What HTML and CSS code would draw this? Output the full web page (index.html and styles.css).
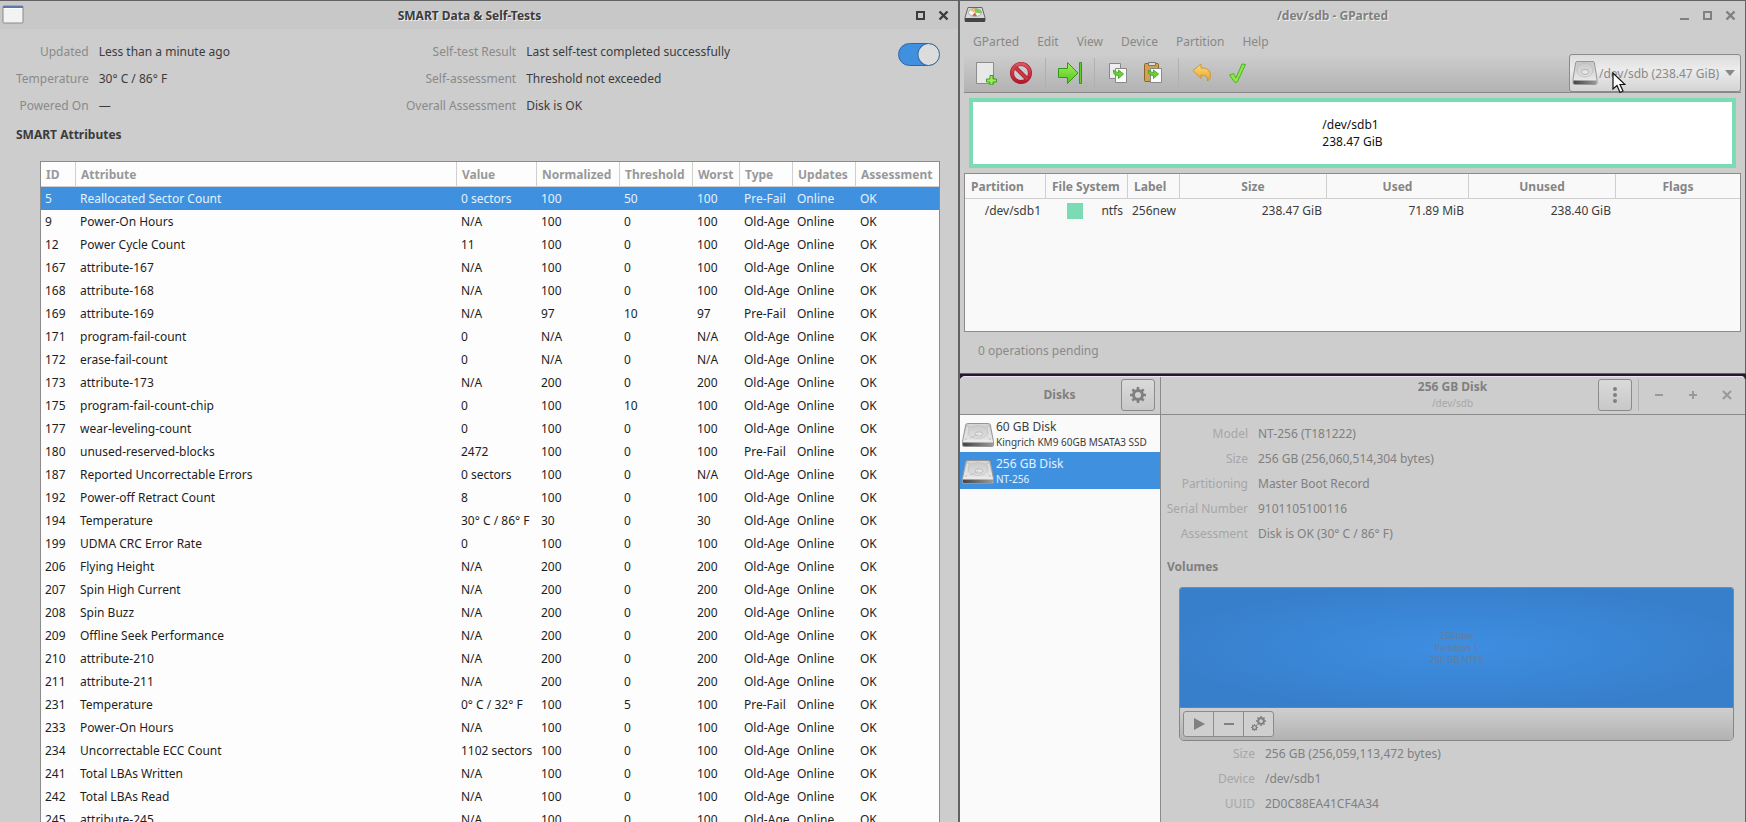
FILE: index.html
```html
<!DOCTYPE html>
<html lang="en">
<head>
  <meta charset="UTF-8">
  <meta name="viewport" content="width=device-width, initial-scale=1.0">
  <title>SMART Data &amp; Self-Tests</title>
  <link rel="stylesheet" href="styles.css">
</head>
<body>
  <svg class="defs" width="0" height="0" aria-hidden="true">
    <defs>
      <linearGradient id="metal" x1="0" y1="0" x2="0" y2="1">
        <stop offset="0" stop-color="#c6c6c6"/>
        <stop offset="1" stop-color="#f0f0f0"/>
      </linearGradient>
      <linearGradient id="front" x1="0" y1="0" x2="1" y2="0">
        <stop offset="0" stop-color="#444"/>
        <stop offset="1" stop-color="#9a9a9a"/>
      </linearGradient>
      <linearGradient id="green" x1="0" y1="0" x2="0" y2="1">
        <stop offset="0" stop-color="#a4ef5c"/>
        <stop offset="1" stop-color="#4fc81c"/>
      </linearGradient>
      <linearGradient id="red" x1="0" y1="0" x2="0" y2="1">
        <stop offset="0" stop-color="#dc5560"/>
        <stop offset="1" stop-color="#b8182c"/>
      </linearGradient>
      <linearGradient id="amber" x1="0" y1="0" x2="0" y2="1">
        <stop offset="0" stop-color="#fbdc7a"/>
        <stop offset="1" stop-color="#e9a52c"/>
      </linearGradient>
    </defs>
    <symbol id="disk" viewBox="0 0 32 26">
      <path d="M5.500 1.500h21q1.500 0 1.800 1.500l3.200 16.500v3.500q0 1.500-1.500 1.500H2q-1.500 0-1.500-1.500v-3.500L3.700 3q.3-1.500 1.800-1.500z" fill="url(#metal)" stroke="#969696"/>
      <path d="M1 20.500h30v2.500q0 1-1 1H2q-1 0-1-1z" fill="url(#front)"/>
      <path d="M6 3h20l3 15.500H3z" fill="none" stroke="#ededed" stroke-width=".7"/>
      <ellipse cx="16" cy="10" rx="9.500" ry="6.500" fill="none" stroke="#c2c2c2" stroke-width=".8"/>
      <ellipse cx="17" cy="12" rx="4" ry="2.200" fill="#e4e4e4" stroke="#b4b4b4" stroke-width=".8"/>
      <path d="M16 12.500l-8 3.500" stroke="#c4c4c4"/>
      <g fill="#aaa"><circle cx="6" cy="4" r=".7"/><circle cx="26" cy="4" r=".7"/><circle cx="4" cy="17" r=".7"/><circle cx="28" cy="17" r=".7"/></g>
    </symbol>
    <symbol id="gear" viewBox="0 0 16 16">
      <g fill="currentColor">
        <path fill-rule="evenodd" d="M8 2a6 6 0 1 0 0 12A6 6 0 0 0 8 2zm0 3a3 3 0 1 1 0 6 3 3 0 0 1 0-6z"/>
        <path id="tooth" d="M6.700 0h2.600v3H6.700zM6.700 13h2.600v3H6.700zM0 6.700h3v2.600H0zM13 6.700h3v2.600h-3z"/>
        <use href="#tooth" transform="rotate(45 8 8)"/>
      </g>
    </symbol>
  </svg>

  <main class="desktop">
    <section class="window smart">
      <header class="titlebar">
        <svg class="app-icon" width="22" height="20" viewBox="0 0 22 20">
          <rect x="1" y="1" width="20" height="17" rx="1" fill="#f3f3f3" stroke="#8a8a8a"/>
          <path d="M1 1h20v2H1z" fill="#5d78a8"/>
          <path d="M2 3h18v1H2z" fill="#fff"/>
        </svg>
        <h1>SMART Data &amp; Self-Tests</h1>
        <div class="window-buttons">
          <button type="button" aria-label="Maximize"><svg width="11" height="11"><path d="M2 2h7v7H2z" fill="none" stroke="currentColor" stroke-width="2"/></svg></button>
          <button type="button" aria-label="Close"><svg width="11" height="11"><path d="M1.500 1.500l8 8M9.500 1.500l-8 8" stroke="currentColor" stroke-width="2.400"/></svg></button>
        </div>
      </header>

      <div class="summary">
        <dl class="facts">
          <dt>Updated</dt><dd>Less than a minute ago</dd>
          <dt>Temperature</dt><dd>30° C / 86° F</dd>
          <dt>Powered On</dt><dd>—</dd>
        </dl>
        <dl class="facts">
          <dt>Self-test Result</dt><dd>Last self-test completed successfully</dd>
          <dt>Self-assessment</dt><dd>Threshold not exceeded</dd>
          <dt>Overall Assessment</dt><dd>Disk is OK</dd>
        </dl>
        <input class="switch" type="checkbox" role="switch" aria-label="Enable SMART" checked>
      </div>

      <h2>SMART Attributes</h2>

      <div class="attributes">
        <table>
          <colgroup>
            <col class="c-id"><col><col class="c-value"><col class="c-norm"><col class="c-thresh"><col class="c-worst"><col class="c-type"><col class="c-updates"><col class="c-assess">
          </colgroup>
          <thead>
            <tr><th>ID</th><th>Attribute</th><th>Value</th><th>Normalized</th><th>Threshold</th><th>Worst</th><th>Type</th><th>Updates</th><th>Assessment</th></tr>
          </thead>
          <tbody>
            <tr class="selected"><td>5</td><td>Reallocated Sector Count</td><td>0 sectors</td><td>100</td><td>50</td><td>100</td><td>Pre-Fail</td><td>Online</td><td>OK</td></tr>
            <tr><td>9</td><td>Power-On Hours</td><td>N/A</td><td>100</td><td>0</td><td>100</td><td>Old-Age</td><td>Online</td><td>OK</td></tr>
            <tr><td>12</td><td>Power Cycle Count</td><td>11</td><td>100</td><td>0</td><td>100</td><td>Old-Age</td><td>Online</td><td>OK</td></tr>
            <tr><td>167</td><td>attribute-167</td><td>N/A</td><td>100</td><td>0</td><td>100</td><td>Old-Age</td><td>Online</td><td>OK</td></tr>
            <tr><td>168</td><td>attribute-168</td><td>N/A</td><td>100</td><td>0</td><td>100</td><td>Old-Age</td><td>Online</td><td>OK</td></tr>
            <tr><td>169</td><td>attribute-169</td><td>N/A</td><td>97</td><td>10</td><td>97</td><td>Pre-Fail</td><td>Online</td><td>OK</td></tr>
            <tr><td>171</td><td>program-fail-count</td><td>0</td><td>N/A</td><td>0</td><td>N/A</td><td>Old-Age</td><td>Online</td><td>OK</td></tr>
            <tr><td>172</td><td>erase-fail-count</td><td>0</td><td>N/A</td><td>0</td><td>N/A</td><td>Old-Age</td><td>Online</td><td>OK</td></tr>
            <tr><td>173</td><td>attribute-173</td><td>N/A</td><td>200</td><td>0</td><td>200</td><td>Old-Age</td><td>Online</td><td>OK</td></tr>
            <tr><td>175</td><td>program-fail-count-chip</td><td>0</td><td>100</td><td>10</td><td>100</td><td>Old-Age</td><td>Online</td><td>OK</td></tr>
            <tr><td>177</td><td>wear-leveling-count</td><td>0</td><td>100</td><td>0</td><td>100</td><td>Old-Age</td><td>Online</td><td>OK</td></tr>
            <tr><td>180</td><td>unused-reserved-blocks</td><td>2472</td><td>100</td><td>0</td><td>100</td><td>Pre-Fail</td><td>Online</td><td>OK</td></tr>
            <tr><td>187</td><td>Reported Uncorrectable Errors</td><td>0 sectors</td><td>100</td><td>0</td><td>N/A</td><td>Old-Age</td><td>Online</td><td>OK</td></tr>
            <tr><td>192</td><td>Power-off Retract Count</td><td>8</td><td>100</td><td>0</td><td>100</td><td>Old-Age</td><td>Online</td><td>OK</td></tr>
            <tr><td>194</td><td>Temperature</td><td>30° C / 86° F</td><td>30</td><td>0</td><td>30</td><td>Old-Age</td><td>Online</td><td>OK</td></tr>
            <tr><td>199</td><td>UDMA CRC Error Rate</td><td>0</td><td>100</td><td>0</td><td>100</td><td>Old-Age</td><td>Online</td><td>OK</td></tr>
            <tr><td>206</td><td>Flying Height</td><td>N/A</td><td>200</td><td>0</td><td>200</td><td>Old-Age</td><td>Online</td><td>OK</td></tr>
            <tr><td>207</td><td>Spin High Current</td><td>N/A</td><td>200</td><td>0</td><td>200</td><td>Old-Age</td><td>Online</td><td>OK</td></tr>
            <tr><td>208</td><td>Spin Buzz</td><td>N/A</td><td>200</td><td>0</td><td>200</td><td>Old-Age</td><td>Online</td><td>OK</td></tr>
            <tr><td>209</td><td>Offline Seek Performance</td><td>N/A</td><td>200</td><td>0</td><td>200</td><td>Old-Age</td><td>Online</td><td>OK</td></tr>
            <tr><td>210</td><td>attribute-210</td><td>N/A</td><td>200</td><td>0</td><td>200</td><td>Old-Age</td><td>Online</td><td>OK</td></tr>
            <tr><td>211</td><td>attribute-211</td><td>N/A</td><td>200</td><td>0</td><td>200</td><td>Old-Age</td><td>Online</td><td>OK</td></tr>
            <tr><td>231</td><td>Temperature</td><td>0° C / 32° F</td><td>100</td><td>5</td><td>100</td><td>Pre-Fail</td><td>Online</td><td>OK</td></tr>
            <tr><td>233</td><td>Power-On Hours</td><td>N/A</td><td>100</td><td>0</td><td>100</td><td>Old-Age</td><td>Online</td><td>OK</td></tr>
            <tr><td>234</td><td>Uncorrectable ECC Count</td><td>1102 sectors</td><td>100</td><td>0</td><td>100</td><td>Old-Age</td><td>Online</td><td>OK</td></tr>
            <tr><td>241</td><td>Total LBAs Written</td><td>N/A</td><td>100</td><td>0</td><td>100</td><td>Old-Age</td><td>Online</td><td>OK</td></tr>
            <tr><td>242</td><td>Total LBAs Read</td><td>N/A</td><td>100</td><td>0</td><td>100</td><td>Old-Age</td><td>Online</td><td>OK</td></tr>
            <tr><td>245</td><td>attribute-245</td><td>N/A</td><td>100</td><td>0</td><td>100</td><td>Old-Age</td><td>Online</td><td>OK</td></tr>
          </tbody>
        </table>
      </div>
    </section>

    <div class="side">
      <section class="window gparted">
        <header class="titlebar inactive">
          <svg class="app-icon" width="22" height="20" viewBox="0 0 22 20">
            <path d="M4 2.500h14l3 10v3q0 1-1 1H2q-1 0-1-1v-3z" fill="#d8d8d8" stroke="#666"/>
            <path d="M1 13h20v3q0 1-1 1H2q-1 0-1-1z" fill="#444"/>
            <ellipse cx="11" cy="7.500" rx="6.500" ry="4" fill="#f5f5f5" stroke="#888" stroke-width=".6"/>
            <path d="M11 7.500L6 5.500a6.500 4 0 0 1 5-2z" fill="#f0c060"/>
            <path d="M11 7.500v-4a6.500 4 0 0 1 6 5z" fill="#7ccc50"/>
            <path d="M11 7.500l2 3.500a6.500 4 0 0 1-5-.5z" fill="#d8605a"/>
          </svg>
          <h1>/dev/sdb - GParted</h1>
          <div class="window-buttons">
            <button type="button" aria-label="Minimize"><svg width="11" height="11"><path d="M1 9h9" stroke="currentColor" stroke-width="2"/></svg></button>
            <button type="button" aria-label="Maximize"><svg width="11" height="11"><path d="M2 2h7v7H2z" fill="none" stroke="currentColor" stroke-width="2"/></svg></button>
            <button type="button" aria-label="Close"><svg width="11" height="11"><path d="M1.500 1.500l8 8M9.500 1.500l-8 8" stroke="currentColor" stroke-width="2.400"/></svg></button>
          </div>
        </header>

        <nav class="menubar">
          <button type="button">GParted</button>
          <button type="button">Edit</button>
          <button type="button">View</button>
          <button type="button">Device</button>
          <button type="button">Partition</button>
          <button type="button">Help</button>
        </nav>

        <div class="toolbar">
          <div class="tools">
            <button type="button" aria-label="New">
              <svg width="24" height="24" viewBox="0 0 24 24">
                <path d="M2.500 1.500h17v21h-17z" fill="#e8e8e8" stroke="#8c8c8c"/>
                <path d="M16 14.500h3v3.500h3.500v3h-3.500v3h-3v-3h-3.500v-3h3.500z" fill="#9cec62" stroke="#3f9d16"/>
              </svg>
            </button>
            <button type="button" aria-label="Delete">
              <svg width="24" height="24" viewBox="0 0 24 24">
                <circle cx="12" cy="12" r="9" fill="#ccc" stroke="#a41c2c" stroke-width="4"/>
                <path d="M6 6l12 12" stroke="#a41c2c" stroke-width="4"/>
                <circle cx="12" cy="12" r="9" fill="none" stroke="url(#red)" stroke-width="2.800"/>
                <path d="M5.500 5.500l13 13" stroke="#cc3848" stroke-width="2.600"/>
              </svg>
            </button>
          </div>
          <div class="tools">
            <button type="button" aria-label="Resize/Move">
              <svg width="24" height="24" viewBox="0 0 24 24">
                <path d="M.5 7.500h9v-6L20 12 9.500 22.500v-6h-9z" fill="url(#green)" stroke="#35961a"/>
                <path d="M21.500 1.500h2v21h-2z" fill="#5fd030" stroke="#35961a"/>
              </svg>
            </button>
          </div>
          <div class="tools">
            <button type="button" aria-label="Copy">
              <svg width="24" height="24" viewBox="0 0 24 24">
                <path d="M2.500 2.500h11v15h-11z" fill="#eee" stroke="#888"/>
                <path d="M8.500 7.500h11v14h-11z" fill="#fafafa" stroke="#888"/>
                <path d="M6.500 9q-1 5.500 5 5.500v3l5-4.500-5-4v2.500q-3 0-5-2.500z" fill="#6bcf38" stroke="#3b9d1a" stroke-width=".8"/>
              </svg>
            </button>
            <button type="button" aria-label="Paste">
              <svg width="24" height="24" viewBox="0 0 24 24">
                <rect x="2.500" y="2.500" width="14" height="18" rx="1" fill="#d2a052" stroke="#8a6428"/>
                <path d="M6.500 1.500h7v3h-7z" fill="#ddd" stroke="#777"/>
                <path d="M8.500 7.500h11v14h-11z" fill="#fafafa" stroke="#888"/>
                <path d="M6.500 9q-1 5.500 5 5.500v3l5-4.500-5-4v2.500q-3 0-5-2.500z" fill="#6bcf38" stroke="#3b9d1a" stroke-width=".8"/>
              </svg>
            </button>
          </div>
          <div class="tools">
            <button type="button" aria-label="Undo">
              <svg width="24" height="24" viewBox="0 0 24 24">
                <path d="M2 9.500l8-6.500v4q9.500-.5 9.500 7.500 0 3.500-3 5.500 1-6-6.500-6v3.500z" fill="url(#amber)" stroke="#c88a28" stroke-width=".8"/>
              </svg>
            </button>
            <button type="button" aria-label="Apply">
              <svg width="24" height="24" viewBox="0 0 24 24">
                <path d="M3.500 14l4-1.500 2.500 4.500L16 3l3.500.5-8 17q-1.500 2-3 .5z" fill="#8ae84c" stroke="#4db31e"/>
              </svg>
            </button>
          </div>
          <label class="device">
            <svg width="26" height="26" viewBox="0 0 26 26">
              <path d="M5 1.500h16q1 0 1.300 1L25 19v4q0 1.500-1.500 1.500h-21Q1 24.500 1 23v-4L3.700 2.500q.3-1 1.300-1z" fill="url(#metal)" stroke="#969696"/>
              <path d="M1.500 20.500h23V23q0 1-1 1h-21q-1 0-1-1z" fill="url(#front)"/>
              <ellipse cx="13" cy="10" rx="8" ry="7" fill="none" stroke="#bbb" stroke-width=".8"/>
              <ellipse cx="13" cy="12" rx="4" ry="2.500" fill="#e4e4e4" stroke="#aaa" stroke-width=".8"/>
            </svg>
            <select aria-label="Device">
              <option>/dev/sdb (238.47 GiB)</option>
            </select>
            <svg width="10" height="6"><path d="M0 0h10L5 6z" fill="#888"/></svg>
          </label>
        </div>

        <div class="partition-map">
          <div>/dev/sdb1<br>238.47 GiB</div>
        </div>

        <div class="partitions">
          <table>
            <colgroup>
              <col class="c-part"><col class="c-fs"><col class="c-label"><col class="c-size"><col class="c-used"><col class="c-unused"><col>
            </colgroup>
            <thead>
              <tr><th>Partition</th><th>File System</th><th>Label</th><th>Size</th><th>Used</th><th>Unused</th><th>Flags</th></tr>
            </thead>
            <tbody>
              <tr><td class="num">/dev/sdb1</td><td><span class="fs"><i></i>ntfs</span></td><td>256new</td><td class="num">238.47 GiB</td><td class="num">71.89 MiB</td><td class="num">238.40 GiB</td><td></td></tr>
            </tbody>
          </table>
        </div>
        <p class="pending">0 operations pending</p>
      </section>

      <section class="window disks">
        <aside class="disk-list">
          <header class="headerbar">
            <h1>Disks</h1>
            <button type="button" class="boxed" aria-label="Application menu"><svg width="16" height="16"><use href="#gear"/></svg></button>
          </header>
          <ul>
            <li>
              <svg width="32" height="26"><use href="#disk"/></svg>
              <div>60 GB Disk<small>Kingrich KM9 60GB MSATA3 SSD</small></div>
            </li>
            <li class="selected">
              <svg width="32" height="26"><use href="#disk"/></svg>
              <div>256 GB Disk<small>NT-256</small></div>
            </li>
          </ul>
        </aside>

        <div class="disk-detail">
          <header class="headerbar">
            <h1>256 GB Disk<small>/dev/sdb</small></h1>
            <button type="button" class="boxed" aria-label="Drive menu">
              <svg width="16" height="16"><g fill="currentColor"><circle cx="8" cy="2" r="2"/><circle cx="8" cy="8" r="2"/><circle cx="8" cy="14" r="2"/></g></svg>
            </button>
            <div class="header-buttons">
              <button type="button" aria-label="Minimize"><svg width="10" height="10"><path d="M1 5h8" stroke="currentColor" stroke-width="2"/></svg></button>
              <button type="button" aria-label="Maximize"><svg width="10" height="10"><path d="M1 5h8M5 1v8" stroke="currentColor" stroke-width="2"/></svg></button>
              <button type="button" aria-label="Close"><svg width="10" height="10"><path d="M1 1l8 8M9 1l-8 8" stroke="currentColor" stroke-width="2"/></svg></button>
            </div>
          </header>

          <dl class="facts drive">
            <dt>Model</dt><dd>NT-256 (T181222)</dd>
            <dt>Size</dt><dd>256 GB (256,060,514,304 bytes)</dd>
            <dt>Partitioning</dt><dd>Master Boot Record</dd>
            <dt>Serial Number</dt><dd>9101105100116</dd>
            <dt>Assessment</dt><dd>Disk is OK (30° C / 86° F)</dd>
          </dl>

          <h2>Volumes</h2>
          <div class="volumes">
            <div class="volume">256new<br>Partition 1<br>256 GB NTFS</div>
            <div class="volume-tools">
              <div class="group">
                <button type="button" aria-label="Mount"><svg width="12" height="14"><path d="M1 1v12l11-6z" fill="currentColor"/></svg></button>
                <button type="button" aria-label="Delete partition"><svg width="12" height="12"><path d="M1 6h10" stroke="currentColor" stroke-width="2"/></svg></button>
                <button type="button" aria-label="Partition options"><svg width="16" height="16"><use href="#gear" x="5" y="0" width="10" height="10"/><use href="#gear" x="0" y="8" width="7" height="7"/></svg></button>
              </div>
            </div>
          </div>
          <dl class="facts volume-facts">
            <dt>Size</dt><dd>256 GB (256,059,113,472 bytes)</dd>
            <dt>Device</dt><dd>/dev/sdb1</dd>
            <dt>UUID</dt><dd>2D0C88EA41CF4A34</dd>
          </dl>
        </div>
      </section>
    </div>
  </main>

  <svg class="pointer" width="14" height="22" viewBox="0 0 14 22">
    <path d="M1 1v16l4-3.500 3 7 3-1.500-3-6.500h5z" fill="#fff" stroke="#111" stroke-width="1.200"/>
  </svg>
</body>
</html>
```
FILE: styles.css
```css
* {
  margin: 0;
  padding: 0;
  box-sizing: border-box;
}

body {
  font-family: 'Noto Sans', sans-serif;
  font-size: 12px;
  line-height: 17px;
  height: 100vh;
  overflow: hidden;
  background: #251833;
  color: #3c3c3c;
}

button, select {
  font: inherit;
  color: inherit;
  background: none;
  border: none;
}

svg {
  display: block;
  flex: none;
}

ul {
  list-style: none;
}

.defs {
  position: absolute;
}

.desktop {
  display: grid;
  grid-template-columns: minmax(0, 960fr) minmax(0, 786fr);
  height: 100vh;
}

.side {
  display: flex;
  flex-direction: column;
  gap: 2px;
  min-height: 0;
}

.window {
  background: #cdcdcd;
  border-top: 1px solid #626262;
  border-right: 1px solid #626262;
  overflow: hidden;
}

/* Title bars */

.titlebar {
  display: flex;
  align-items: center;
  height: 28px;
  padding: 0 9px 0 2px;
  background: #c8c8c8;
}

.titlebar h1 {
  flex: 1;
  text-align: center;
  font-size: 12px;
  text-shadow: 1px 1px 0 #eee;
}

.titlebar.inactive {
  background: #cdcdcd;
  color: #808080;
}

.window-buttons {
  display: flex;
  gap: 12px;
}

h2 {
  font-size: 12px;
}

.facts {
  display: grid;
  grid-template-columns: auto 1fr;
  grid-auto-rows: 27px;
  align-items: center;
  column-gap: 10px;
  white-space: nowrap;
}

.facts dt {
  text-align: right;
  color: #8a8a8a;
}

/* SMART window */

.smart {
  display: flex;
  flex-direction: column;
  min-height: 0;
  border-right-width: 2px;
}

.summary {
  display: grid;
  grid-template-columns: 390fr 492fr 42px;
  padding: 9px 18px 0 16px;
}

.switch {
  appearance: none;
  width: 42px;
  height: 23px;
  margin-top: 5px;
  border: 1px solid #2f66a5;
  border-radius: 12px;
  background: radial-gradient(circle at 30px 50%, #dcdcdc 10px, #2f66a5 11px, #4090e0 12px);
}

.smart h2 {
  padding: 7px 16px;
}

.attributes {
  flex: 1;
  min-height: 0;
  overflow: hidden;
  margin: 11px 18px 0 40px;
  border: 1px solid #8b8b8b;
  border-bottom: none;
  background: #fdfdfd;
}

table {
  width: 100%;
  table-layout: fixed;
  border-collapse: separate;
  border-spacing: 0;
  white-space: nowrap;
}

th {
  height: 25px;
  padding: 0 5px;
  text-align: left;
  color: #999;
  border-left: 1px solid #cfcfcf;
  border-bottom: 1px solid #cfcfcf;
}

th:first-child {
  border-left: none;
}

td {
  height: 23px;
  padding: 0 4px 0 5px;
}

.attributes td {
  color: #1d1d1d;
}

td:first-child {
  padding-left: 4px;
}

.attributes .selected td {
  background: #4090e0;
  color: #e4f2fd;
}

.c-id { width: 34px; }
.c-value { width: 80px; }
.c-norm { width: 83px; }
.c-thresh { width: 73px; }
.c-worst { width: 47px; }
.c-type { width: 53px; }
.c-updates { width: 63px; }
.c-assess { width: 84px; }

/* GParted window */

.gparted {
  display: flex;
  flex-direction: column;
  flex: none;
  height: 374px;
  border-bottom: 1px solid #626262;
}

.gparted .titlebar {
  padding-left: 4px;
}

.menubar {
  display: flex;
  gap: 18px;
  padding: 4px 13px;
  color: #888;
}

.toolbar {
  display: flex;
  align-items: center;
  height: 39px;
  padding-left: 4px;
  margin: 0 4px;
  background: linear-gradient(#cdcdcd, #b2b2b2);
  border-bottom: 1px solid #888;
}

.tools {
  display: flex;
  gap: 11px;
  padding: 3px 12px;
  border-left: 1px solid #b0b0b0;
}

.tools:first-child {
  padding-left: 6px;
  border-left: none;
}

.device {
  display: flex;
  align-items: center;
  gap: 1px;
  align-self: stretch;
  margin-left: auto;
  padding: 0 5px 0 2px;
  border: 1px solid #8b8b8b;
  border-radius: 3px;
  background: linear-gradient(#dcdcdc, #ececec 40%, #d4d4d4);
  color: #8a8a8a;
}

.device select {
  appearance: none;
  padding-right: 4px;
}

.partition-map {
  display: flex;
  align-items: center;
  justify-content: center;
  height: 70px;
  margin: 5px 9px;
  border: 4px solid #7adbb5;
  background: #fff;
  color: #111;
}

.partitions {
  flex: 1;
  margin: 0 4px;
  border: 1px solid #8b8b8b;
  background: #f9f9f9;
}

.partitions th {
  padding: 0 6px;
  text-align: center;
  color: #858585;
}

.partitions th:nth-child(-n+3) {
  text-align: left;
}

.partitions .num {
  text-align: right;
}

.fs {
  display: flex;
  align-items: center;
  justify-content: space-between;
  padding-left: 17px;
}

.fs i {
  width: 16px;
  height: 16px;
  background: #7adbb5;
}

.c-part { width: 80px; }
.c-fs { width: 82px; }
.c-label { width: 52px; }
.c-size { width: 147px; }
.c-used { width: 142px; }
.c-unused { width: 147px; }

.pending {
  padding: 10px 18px 14px;
  color: #8a8a8a;
}

/* Disks window */

.disks {
  display: flex;
  flex: 1;
  min-height: 0;
  border-top-color: #ece4f0;
  border-radius: 5px 5px 0 0;
  color: #808080;
}

.disk-list {
  flex: none;
  width: 201px;
  border-right: 1px solid #8b8b8b;
  background: #fafafa;
}

.headerbar {
  display: flex;
  align-items: center;
  height: 38px;
  padding-bottom: 1px;
  border-bottom: 1px solid #8b8b8b;
  background: #cdcdcd;
}

.headerbar h1 {
  flex: 1;
  text-align: center;
  font-size: 12px;
  line-height: 16px;
}

.headerbar small {
  display: block;
  font-size: 10px;
  font-weight: normal;
  color: #a8a8a8;
}

.disk-list .headerbar {
  padding-left: 38px;
  padding-right: 5px;
}

.boxed {
  display: flex;
  align-items: center;
  justify-content: center;
  width: 34px;
  height: 32px;
  border: 1px solid #8b8b8b;
  border-radius: 3px;
  background: linear-gradient(#dadada, #c8c8c8);
}

.header-buttons {
  display: flex;
  gap: 24px;
  margin-left: 6px;
  padding: 11px 13px 11px 15px;
  border-left: 1px solid #b4b4b4;
  color: #999;
}

.disk-list li {
  display: flex;
  align-items: center;
  gap: 2px;
  height: 37px;
  padding: 2px 0 0 2px;
  line-height: 16px;
  color: #3c3c3c;
}

.disk-list small {
  display: block;
  font-size: 10px;
  line-height: 15px;
}

.disk-list .selected {
  background: #4090e0;
  color: #e4f2fd;
}

.disk-detail {
  flex: 1;
  min-width: 0;
}

.disk-detail .headerbar {
  padding-left: 146px;
}

.disk-detail .facts {
  grid-auto-rows: 25px;
}

.disk-detail .facts dt {
  color: #a6a6a6;
}

.disk-detail .drive {
  grid-template-columns: 81px 1fr;
  padding: 6px;
}

.disk-detail h2 {
  padding: 6px 6px 5px;
}

.volumes {
  margin: 7px 11px 0 18px;
  border: 1px solid #868686;
  border-radius: 3px 3px 5px 5px;
  overflow: hidden;
}

.volume {
  display: flex;
  align-items: center;
  justify-content: center;
  height: 120px;
  text-align: center;
  font-size: 9px;
  line-height: 12px;
  color: #647d9c;
  background: radial-gradient(ellipse, #3d8ee2, #387fcb 75%);
  border-bottom: 1px solid #76808c;
}

.volume-tools {
  padding: 3px;
  background: linear-gradient(#cfcfcf, #b2b2b2);
}

.group {
  display: inline-flex;
  vertical-align: top;
  border: 1px solid #8b8b8b;
  border-radius: 3px;
  background: #cfcfcf;
}

.group button {
  display: flex;
  align-items: center;
  justify-content: center;
  width: 30px;
  height: 24px;
}

.group button:first-child {
  width: 29px;
}

.group button + button {
  border-left: 1px solid #8b8b8b;
}

.disk-detail .drive dt {
  justify-self: end;
}

.disk-detail .volume-facts {
  grid-template-columns: 94px 1fr;
}

/* Mouse pointer, over everything */

.pointer {
  position: absolute;
  top: 72px;
  right: 120px;
}
```
